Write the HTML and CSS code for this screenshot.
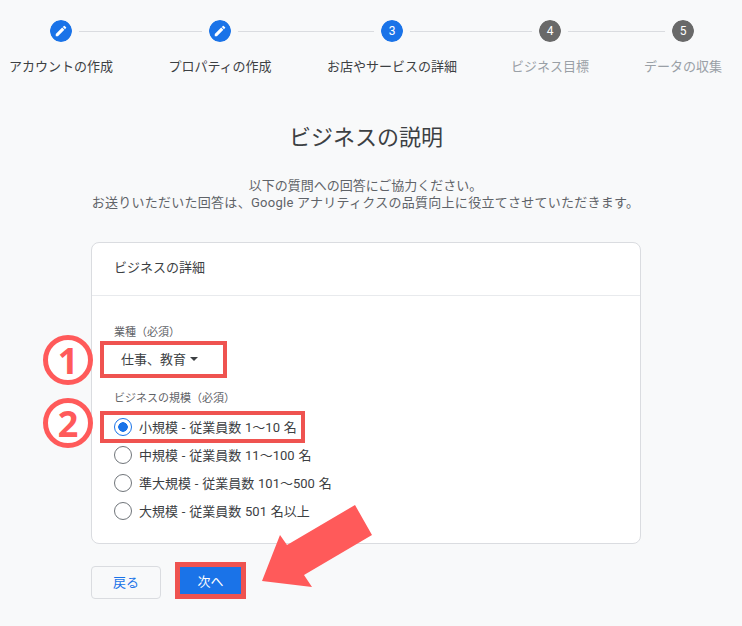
FILE: index.html
```html
<!DOCTYPE html>
<html lang="ja">
<head>
    <meta charset="UTF-8">
    <title>ビジネスの説明</title>
    <link rel="stylesheet" href="styles.css">
</head>
<body>
    <div class="stepper">
        <div class="step">
            <span class="step-icon done"><svg width="14" height="14" viewBox="0 0 24 24"><path fill="#fff" d="M3 17.25V21h3.75L17.81 9.94l-3.75-3.75L3 17.25zM20.71 7.04a1 1 0 0 0 0-1.41l-2.34-2.34a1 1 0 0 0-1.41 0l-1.83 1.83 3.75 3.75 1.83-1.83z"/></svg></span>
            <span class="step-label">アカウントの作成</span>
        </div>
        <div class="step">
            <span class="step-icon done"><svg width="14" height="14" viewBox="0 0 24 24"><path fill="#fff" d="M3 17.25V21h3.75L17.81 9.94l-3.75-3.75L3 17.25zM20.71 7.04a1 1 0 0 0 0-1.41l-2.34-2.34a1 1 0 0 0-1.41 0l-1.83 1.83 3.75 3.75 1.83-1.83z"/></svg></span>
            <span class="step-label">プロパティの作成</span>
        </div>
        <div class="step">
            <span class="step-icon done">3</span>
            <span class="step-label">お店やサービスの詳細</span>
        </div>
        <div class="step">
            <span class="step-icon todo">4</span>
            <span class="step-label muted">ビジネス目標</span>
        </div>
        <div class="step">
            <span class="step-icon todo">5</span>
            <span class="step-label muted">データの収集</span>
        </div>
    </div>

    <h1 class="title">ビジネスの説明</h1>
    <p class="intro">以下の質問への回答にご協力ください。<br><span class="intro-wide">お送りいただいた回答は、Google アナリティクスの品質向上に役立てさせていただきます。</span></p>

    <section class="card">
        <h2 class="card-head">ビジネスの詳細</h2>
        <div class="card-body">
            <div class="field-label">業種（必須）</div>
            <div class="select">仕事、教育<span class="caret"></span></div>
            <div class="field-label size-label">ビジネスの規模（必須）</div>
            <div class="radio-row first">
                <label class="radio-item"><span class="radio checked"></span>小規模 - 従業員数 1～10 名</label>
            </div>
            <div class="radio-row">
                <label class="radio-item"><span class="radio"></span>中規模 - 従業員数 11～100 名</label>
            </div>
            <div class="radio-row">
                <label class="radio-item"><span class="radio"></span>準大規模 - 従業員数 101～500 名</label>
            </div>
            <div class="radio-row">
                <label class="radio-item"><span class="radio"></span>大規模 - 従業員数 501 名以上</label>
            </div>
        </div>
    </section>

    <div class="actions">
        <button class="btn-back">戻る</button>
        <button class="btn-next">次へ</button>
    </div>

    <!-- annotations over the screenshot -->
    <span class="marker marker-1">1</span>
    <span class="marker marker-2">2</span>
    <svg class="arrow" width="110" height="82" viewBox="0 0 110 82"><path fill="#ff5a5a" d="M0 76 L18 30 L25 40 L93 0 L110 30 L42 70 L50 82 Z"/></svg>
</body>
</html>
```
FILE: styles.css
```css
body { margin: 0; height: 626px; overflow: hidden; position: relative; background: #f8f9fa; font-family: Roboto, "Noto Sans CJK JP", sans-serif; color: #3c4043; }

.stepper { display: grid; grid-template-columns: 122px 196px 148px 168px 98px; padding-top: 20px; height: 54px; position: relative; }
.stepper::before { content: ""; position: absolute; left: 61px; width: 622px; top: 31px; border-top: 1px solid #dadce0; }
.step { display: flex; flex-direction: column; align-items: center; gap: 16px; position: relative; }
.step-icon { width: 22px; height: 22px; border-radius: 50%; display: flex; align-items: center; justify-content: center; font-size: 12px; color: #fff; outline: 7px solid #f8f9fa; }
.step-icon.done { background: #1a73e8; }
.step-icon.todo { background: #696969; }
.step-label { font-size: 13px; line-height: 18px; white-space: nowrap; }
.step-label.muted { color: #9aa0a6; }

.title { margin: 50px 0 0; padding-right: 10px; text-align: center; font-size: 22px; font-weight: 400; line-height: 28px; }
.intro { margin: 25px 0 0; padding-right: 11px; text-align: center; font-size: 13px; line-height: 17px; color: #5f6368; }
.intro-wide { letter-spacing: 0.27px; }

.card { margin: 31px 0 0 91px; width: 548px; height: 300px; background: #fff; border: 1px solid #dadce0; border-radius: 8px; }
.card-head { margin: 0; height: 52px; line-height: 50px; padding-left: 22px; font-size: 13px; font-weight: 400; border-bottom: 1px solid #e8eaed; }
.card-body { padding: 29px 0 0 22px; }
.field-label { font-size: 11px; line-height: 16px; color: #5f6368; }
.select { display: flex; align-items: center; box-sizing: border-box; width: 127px; height: 37px; margin-left: -14px; padding: 0 0 2px 17px; font-size: 13px; border: 4px solid #ef5350; }
.caret { margin-left: 4px; border: 4px solid transparent; border-top-color: #3c4043; border-bottom: 0; }
.size-label { margin-top: 13px; }

.radio-row { height: 28px; display: flex; align-items: center; }
.radio-row.first { margin-top: 6px; }
.radio-item { display: flex; align-items: center; gap: 7px; padding-bottom: 2px; font-size: 13px; word-spacing: 0.6px; white-space: nowrap; }
.radio-row.first .radio-item { box-sizing: border-box; height: 32px; margin-left: -14px; padding: 0 4px 2px 10px; border: 4px solid #ef5350; }
.radio { box-sizing: border-box; width: 18px; height: 18px; margin-top: 2px; border: 1.5px solid #70757a; border-radius: 50%; flex: none; }
.radio.checked { border-color: #1a73e8; background: radial-gradient(circle, #1a73e8 0 4.5px, transparent 5px); }

.actions { display: flex; gap: 14px; margin: 18px 0 0 91px; align-items: flex-end; }
.btn-back { width: 70px; height: 33px; padding: 0 0 3px; background: #f8f9fa; border: 1px solid #dadce0; border-radius: 4px; color: #1a73e8; font: inherit; font-size: 13px; }
.btn-next { box-sizing: border-box; width: 71px; height: 37px; background: #1a73e8; border: 5px solid #ef5350; color: #fff; font: inherit; font-size: 13px; }

.marker { position: absolute; left: 43px; width: 50px; height: 50px; box-sizing: border-box; border: 5px solid #ff5a5a; border-radius: 50%; background: #fff; color: #ff5a5a; font-family: "Open Sans", sans-serif; font-size: 36px; font-weight: 700; display: flex; align-items: center; justify-content: center; }
.marker-1 { top: 335px; }
.marker-2 { top: 398px; }
.arrow { position: absolute; left: 262px; top: 505px; }
```
